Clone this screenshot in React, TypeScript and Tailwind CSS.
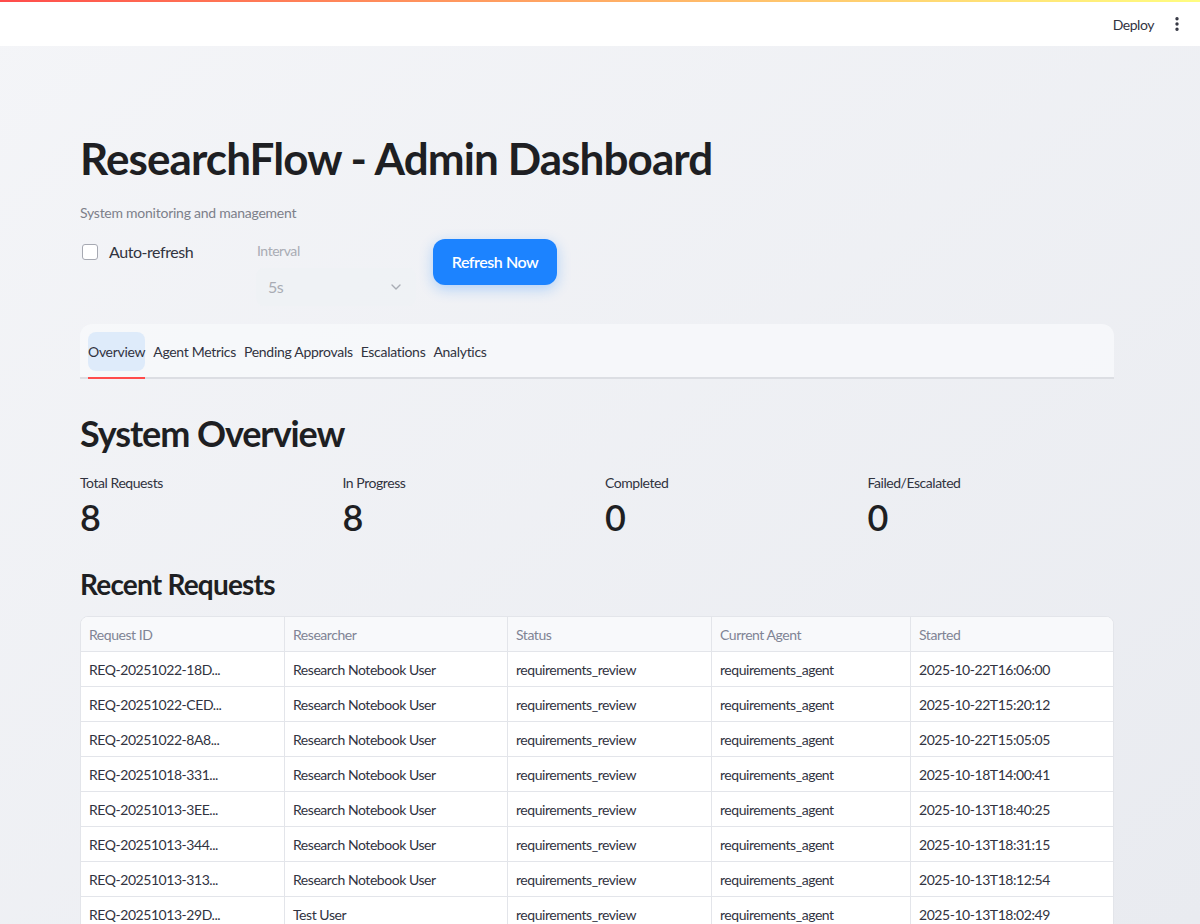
import { ChevronDown, EllipsisVertical } from "lucide-react";

const rows = [
  ["REQ-20251022-18D...", "Research Notebook User", "2025-10-22T16:06:00"],
  ["REQ-20251022-CED...", "Research Notebook User", "2025-10-22T15:20:12"],
  ["REQ-20251022-8A8...", "Research Notebook User", "2025-10-22T15:05:05"],
  ["REQ-20251018-331...", "Research Notebook User", "2025-10-18T14:00:41"],
  ["REQ-20251013-3EE...", "Research Notebook User", "2025-10-13T18:40:25"],
  ["REQ-20251013-344...", "Research Notebook User", "2025-10-13T18:31:15"],
  ["REQ-20251013-313...", "Research Notebook User", "2025-10-13T18:12:54"],
  ["REQ-20251013-29D...", "Test User", "2025-10-13T18:02:49"],
];

const metrics = [
  ["Total Requests", "8"],
  ["In Progress", "8"],
  ["Completed", "0"],
  ["Failed/Escalated", "0"],
];

const tabs = ["Overview", "Agent Metrics", "Pending Approvals", "Escalations", "Analytics"];

// column widths of the requests table
const cols = ["w-[204px]", "w-[223px]", "w-[204px]", "w-[199px]", "flex-1"];

export default function App() {
  return (
    <div className="h-[924px] overflow-hidden bg-gradient-to-br from-[#f4f5f8] to-[#e9ebf0] font-['Lato',sans-serif] tracking-[-0.45px] text-[#31333f]">
      {/* Top bar */}
      <header className="h-[46px] bg-white">
        <div className="h-[2px] bg-gradient-to-r from-[#ff4b4b] to-[#fffd80]" />
        <div className="flex h-[44px] items-center justify-end pr-[14px] text-[14px] text-[#31333f]">
          <span className="mr-[14px]">Deploy</span>
          <EllipsisVertical size={18} strokeWidth={2.5} />
        </div>
      </header>

      <main className="pl-[80px] pr-[86px] pt-[84px]">
        <h1 className="text-[44px] font-bold leading-[56px] tracking-[-0.9px] text-[#1e1f23]">
          ResearchFlow - Admin Dashboard
        </h1>
        <p className="mt-[16px] text-[14px] tracking-[-0.25px] text-[#7d808a]">System monitoring and management</p>

        {/* Controls */}
        <div className="mt-[14px] flex items-start">
          <label className="mt-[3px] flex w-[176px] items-center gap-[11px] pl-[2px]">
            <span className="h-[16px] w-[16px] rounded-[3px] border border-[#a6a9b2] bg-white" />
            <span className="text-[16px] text-[#31333f]">Auto-refresh</span>
          </label>
          <div className="mt-[3px] w-[160px]">
            <div className="pl-[1px] text-[14px] text-[#a9acb4]">Interval</div>
            <div className="mt-[7px] flex h-[38px] items-center justify-between rounded-lg bg-[#eff1f5]/60 pl-[12px] pr-[12px] text-[16px] text-[#a9acb4]">
              <span>5s</span>
              <ChevronDown size={16} />
            </div>
          </div>
          <button className="ml-[17px] mt-[2px] h-[46px] w-[124px] rounded-xl bg-[#1c83ff] text-[16px] font-semibold text-white shadow-[0_4px_14px_rgba(28,131,255,0.3)]">
            Refresh Now
          </button>
        </div>

        {/* Tabs */}
        <div className="mt-[18px] rounded-t-xl border-b-2 border-[#dcdee3] bg-[#f8f9fb]/80 px-[8px] pt-[8px]">
          <div className="flex gap-[8px] text-[14px] tracking-[-0.3px] text-[#31333f]">
            {tabs.map((t, i) => (
              <div key={t} className="flex flex-col">
                <div className={`flex h-[39px] items-center rounded-lg ${i === 0 ? "bg-[#deebfa]" : ""}`}>{t}</div>
                <div className={`mb-[-2px] mt-[6px] h-[2px] ${i === 0 ? "bg-[#ff4b4b]" : ""}`} />
              </div>
            ))}
          </div>
        </div>

        <h2 className="mt-[31px] text-[36px] font-bold leading-[46px] tracking-[-1.1px] text-[#1e1f23]">System Overview</h2>

        <div className="mt-[17px] grid grid-cols-4 gap-4">
          {metrics.map(([l, v]) => (
            <div key={l}>
              <div className="text-[14px] leading-[20px] text-[#31333f]">{l}</div>
              <div className="mt-[2px] text-[36px] font-semibold leading-[44px] text-[#1e1f23]">{v}</div>
            </div>
          ))}
        </div>

        <h3 className="mt-[27px] text-[28px] font-bold leading-[36px] tracking-[-0.8px] text-[#1e1f23]">Recent Requests</h3>

        <div className="mt-[14px] overflow-hidden rounded-t-lg border border-[#e3e5ea] bg-white text-[14px]">
          <div className="flex h-[35px] border-b border-[#e3e5ea] bg-[#f8f9fb] text-[#808495]">
            {["Request ID", "Researcher", "Status", "Current Agent", "Started"].map((h, i) => (
              <div key={h} className={`${cols[i]} flex items-center px-[8px] ${i < 4 ? "border-r border-[#e3e5ea]" : ""}`}>
                {h}
              </div>
            ))}
          </div>
          {rows.map(([id, who, started]) => (
            <div key={id} className="flex h-[35px] border-b border-[#e3e5ea] text-[#31333f]">
              {[id, who, "requirements_review", "requirements_agent", started].map((c, i) => (
                <div key={i} className={`${cols[i]} flex items-center px-[8px] ${i < 4 ? "border-r border-[#e3e5ea]" : ""}`}>
                  {c}
                </div>
              ))}
            </div>
          ))}
        </div>
      </main>
    </div>
  );
}
